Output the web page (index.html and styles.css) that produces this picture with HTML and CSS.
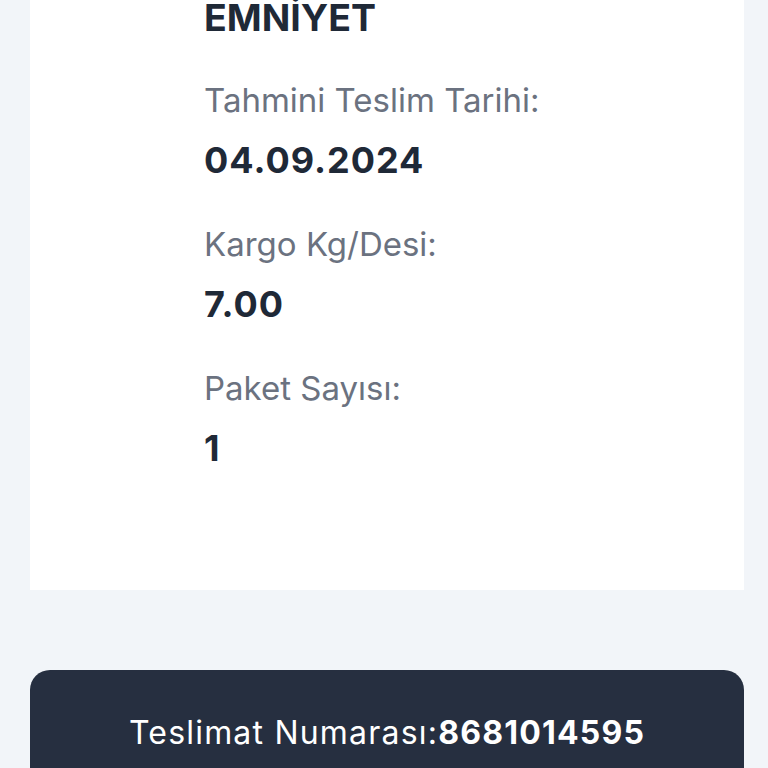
FILE: index.html
```html
<!DOCTYPE html>
<html lang="tr">
<head>
<meta charset="utf-8">
<link rel="stylesheet" href="styles.css">
</head>
<body>
<main class="page">
  <section class="card">
    <div class="company">EMNİYET</div>
    <div class="field">
      <div class="label">Tahmini Teslim Tarihi:</div>
      <div class="value">04.09.2024</div>
    </div>
    <div class="field">
      <div class="label">Kargo Kg/Desi:</div>
      <div class="value">7.00</div>
    </div>
    <div class="field">
      <div class="label">Paket Sayısı:</div>
      <div class="value">1</div>
    </div>
  </section>
  <section class="delivery">
    <span class="delivery-label">Teslimat Numarası:</span><span class="delivery-num">8681014595</span>
  </section>
</main>
</body>
</html>
```
FILE: styles.css
```css
html, body {
  margin: 0;
  padding: 0;
  background: #f2f5f9;
}
body {
  font-family: "Inter", "Noto Sans", sans-serif;
  color: #1f2937;
  height: 768px;
  overflow: hidden;
}
.page {
  display: flex;
  flex-direction: column;
  gap: 80px;
  padding: 0 24px 0 30px;
}
.card {
  background: #ffffff;
  padding: 0 0 122px 174px;
  display: flex;
  flex-direction: column;
  gap: 44px;
}
.company {
  font-size: 37.5px;
  line-height: 36px;
  font-weight: 700;
  color: #1f2937;
}
.field {
  display: flex;
  flex-direction: column;
  gap: 20px;
}
.label {
  font-size: 33px;
  line-height: 40px;
  color: #6b7280;
}
.value {
  font-size: 36px;
  line-height: 40px;
  font-weight: 700;
  letter-spacing: 1px;
  color: #1f2937;
}
.delivery {
  background: #262f40;
  border-radius: 20px 20px 0 0;
  padding: 43px 0 40px;
  text-align: center;
  color: #ffffff;
  font-size: 32px;
  line-height: 40px;
  letter-spacing: 1.2px;
}
.delivery-num {
  font-weight: 700;
}
```
